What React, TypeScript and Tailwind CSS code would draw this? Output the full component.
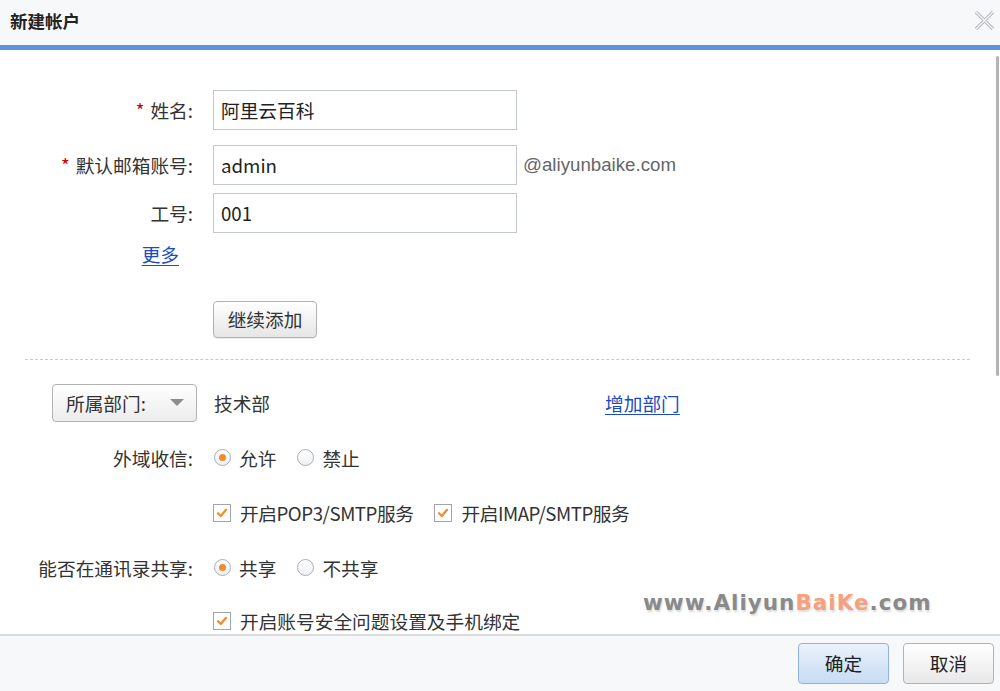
import React from "react";

const F = '"Noto Sans CJK SC", "Liberation Sans", sans-serif';

function Radio({ checked }: { checked?: boolean }) {
  return (
    <span className="w-[17px] h-[17px] rounded-full border border-[#a9aeb6] bg-gradient-to-b from-white to-[#eef0f3] flex items-center justify-center shrink-0">
      {checked && <span className="w-[7px] h-[7px] rounded-full bg-[#f08c2c]" />}
    </span>
  );
}

function Check() {
  return (
    <span className="w-[18px] h-[18px] border border-[#9fa5ae] bg-white flex items-center justify-center shrink-0">
      <svg width="12" height="12" viewBox="0 0 12 12">
        <path d="M2 6.2 L4.8 9 L10 2.8" fill="none" stroke="#f08c2c" strokeWidth="2.2" strokeLinecap="round" strokeLinejoin="round" />
      </svg>
    </span>
  );
}

function Input({ value }: { value: string }) {
  return (
    <div className="w-[304px] h-[40px] border border-[#c3c7cf] bg-white flex items-center px-[7px] text-[18.7px] text-[#222]">
      {value}
    </div>
  );
}

export default function App() {
  return (
    <div className="w-[1000px] h-[691px] flex flex-col bg-white text-[#333] overflow-hidden" style={{ fontFamily: F }}>
      {/* header */}
      <div className="h-[50px] shrink-0 bg-[#f7f8fa] border-b-[5px] border-[#5d93dc] flex items-center justify-between pl-[10px] pr-[5px]">
        <span className="text-[17.5px] font-bold text-[#222] -mt-[3px]">新建帐户</span>
        <svg width="21" height="19" viewBox="0 0 21 19" className="-mt-[4px]">
          <path d="M2 1 L19 18 M19 1 L2 18" stroke="#b3b8bf" strokeWidth="3.4" fill="none" />
          <path d="M2 1 L19 18 M19 1 L2 18" stroke="#f7f8fa" strokeWidth="1.3" fill="none" />
        </svg>
      </div>

      {/* body */}
      <div className="flex-1 relative overflow-hidden">
        <div className="absolute right-[1px] top-[6px] w-[3px] h-[320px] bg-[#b4b4b4] rounded-full" />

        <div className="pt-[40px] flex flex-col text-[18.7px]">
          <div className="flex items-center h-[40px]">
            <div className="w-[195px] text-right pr-[2px]"><span className="text-[#c00] mr-[6px]">*</span>姓名:</div>
            <div className="ml-[18px]"><Input value="阿里云百科" /></div>
          </div>
          <div className="flex items-center h-[40px] mt-[15px]">
            <div className="w-[195px] text-right pr-[2px]"><span className="text-[#c00] mr-[6px]">*</span>默认邮箱账号:</div>
            <div className="ml-[18px]"><Input value="admin" /></div>
            <span className="ml-[6px] text-[#666]" style={{ fontFamily: '"Liberation Sans", sans-serif' }}>@aliyunbaike.com</span>
          </div>
          <div className="flex items-center h-[40px] mt-[8px]">
            <div className="w-[195px] text-right pr-[2px]">工号:</div>
            <div className="ml-[18px]"><Input value="001" /></div>
          </div>
          <div className="flex items-center h-[30px] mt-[6px]">
            <div className="w-[179px] text-right">
              <span className="text-[#1a4cc0] underline underline-offset-[3px]">更多</span>
            </div>
          </div>
          <div className="flex mt-[32px] pl-[213px]">
            <button className="w-[104px] h-[37px] rounded-[4px] border border-[#b3b3b3] bg-gradient-to-b from-white to-[#e6e6e6] text-[18.7px] text-[#333] shadow-[0_1px_1px_rgba(0,0,0,0.08)]">继续添加</button>
          </div>
          <div className="mx-[25px] w-[945px] mt-[21px] border-t border-dashed border-[#c9c9c9]" />

          <div className="flex items-center mt-[24px] h-[38px]">
            <div className="ml-[52px] w-[145px] h-[38px] rounded-[4px] border border-[#b3b3b3] bg-gradient-to-b from-white to-[#ececec] flex items-center pl-[13px] pr-[12px] justify-between">
              <span>所属部门:</span>
              <svg width="14" height="8" viewBox="0 0 14 8"><path d="M0 0 H14 L7 7 Z" fill="#8d8d8d" /></svg>
            </div>
            <span className="ml-[17px]">技术部</span>
            <span className="ml-[335px] text-[#1a4cc0] underline underline-offset-[3px]">增加部门</span>
          </div>

          <div className="flex items-center mt-[18px] h-[36px]">
            <div className="w-[195px] text-right pr-[2px]">外域收信:</div>
            <div className="ml-[19px] flex items-center">
              <Radio checked />
              <span className="ml-[8px]">允许</span>
              <span className="ml-[21px]"><Radio /></span>
              <span className="ml-[8px]">禁止</span>
            </div>
          </div>

          <div className="flex items-center mt-[19px] h-[36px] pl-[213px]">
            <Check />
            <span className="ml-[9px] tracking-[-0.45px]">开启POP3/SMTP服务</span>
            <span className="ml-[21px]"><Check /></span>
            <span className="ml-[9px] tracking-[-0.45px]">开启IMAP/SMTP服务</span>
          </div>

          <div className="flex items-center mt-[19px] h-[36px]">
            <div className="w-[195px] text-right pr-[2px]">能否在通讯录共享:</div>
            <div className="ml-[19px] flex items-center">
              <Radio checked />
              <span className="ml-[8px]">共享</span>
              <span className="ml-[21px]"><Radio /></span>
              <span className="ml-[8px]">不共享</span>
            </div>
          </div>

          <div className="flex items-center mt-[24px] h-[22px] leading-[22px] pl-[213px]">
            <Check />
            <span className="ml-[9px]">开启账号安全问题设置及手机绑定</span>
          </div>
        </div>

        <div
          className="absolute left-[643px] top-[537px] text-[21.5px] font-bold tracking-[1px] text-[#8a8a8a]"
          style={{ fontFamily: '"DejaVu Sans", sans-serif', textShadow: "1px 2px 2px rgba(0,0,0,0.15)" }}
        >
          www.Aliyun<span className="text-[#f5a07e]">BaiKe</span>.com
        </div>
      </div>

      {/* footer */}
      <div className="h-[57px] shrink-0 bg-[#f7f8fa] border-t-2 border-[#d9dbdf] flex items-center justify-end pr-[6px] gap-[14px]">
        <button className="w-[91px] h-[41px] rounded-[4px] border border-[#8fb3e0] bg-gradient-to-b from-[#eaf2fc] to-[#c7dcf4] text-[18.7px] text-[#222]">确定</button>
        <button className="w-[91px] h-[41px] rounded-[4px] border border-[#b3b3b3] bg-gradient-to-b from-white to-[#e8e8e8] text-[18.7px] text-[#222]">取消</button>
      </div>
    </div>
  );
}
